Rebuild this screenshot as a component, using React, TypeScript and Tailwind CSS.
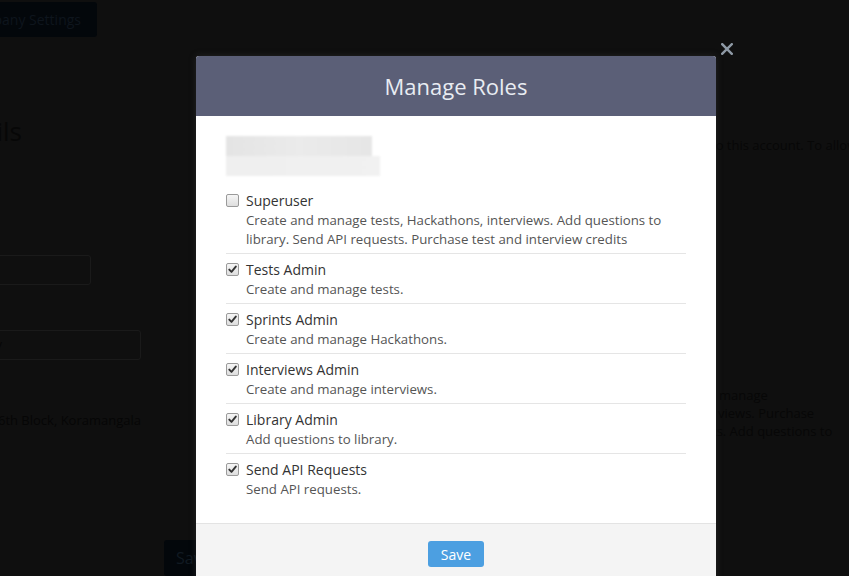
import React from "react";

const roles = [
  {
    name: "Superuser",
    desc: "Create and manage tests, Hackathons, interviews. Add questions to library. Send API requests. Purchase test and interview credits",
    checked: false,
  },
  { name: "Tests Admin", desc: "Create and manage tests.", checked: true },
  { name: "Sprints Admin", desc: "Create and manage Hackathons.", checked: true },
  { name: "Interviews Admin", desc: "Create and manage interviews.", checked: true },
  { name: "Library Admin", desc: "Add questions to library.", checked: true },
  { name: "Send API Requests", desc: "Send API requests.", checked: true },
];

function Check({ checked }: { checked: boolean }) {
  return (
    <span className="mt-[4px] flex h-[13px] w-[13px] shrink-0 items-center justify-center rounded-[2px] border border-[#9a9a9a] bg-gradient-to-b from-[#f6f6f6] to-[#dedede]">
      {checked && (
        <svg width="9" height="9" viewBox="0 0 9 9">
          <path d="M1.3 4.6 L3.5 6.9 L7.8 1.6" fill="none" stroke="#333" strokeWidth="1.9" strokeLinecap="round" strokeLinejoin="round" />
        </svg>
      )}
    </span>
  );
}

export default function App() {
  return (
    <div className="relative h-[576px] w-full overflow-hidden bg-[#0f0f0f] font-['Open_Sans',sans-serif]">
      {/* background page */}
      <div className="flex h-full">
        <div className="flex w-[196px] shrink-0 flex-col overflow-hidden">
          <div className="mt-[2px] flex w-[97px] justify-end">
            <div className="flex h-[35px] shrink-0 items-center whitespace-nowrap rounded-[3px] bg-[#03070b] px-[16px] text-[14px] text-[#0e151d]">
              Company Settings
            </div>
          </div>
          <div className="mt-[74px] flex w-[22px] justify-end whitespace-nowrap text-[26px] leading-[40px] text-[#070707]">
            Company Details
          </div>
          <div className="mt-[104px] flex w-[91px] justify-end">
            <div className="h-[30px] w-[200px] shrink-0 rounded-[3px] border border-[#1a1a1a]" />
          </div>
          <div className="mt-[45px] flex w-[141px] justify-end">
            <div className="flex h-[30px] w-[300px] shrink-0 items-center justify-end rounded-[3px] border border-[#1a1a1a] pr-[138px] text-[13px] text-[#060606]">
              India
              <span>y</span>
            </div>
          </div>
          <div className="mt-[44px] h-px w-full bg-[#1d1d1d]" />
          <div className="mt-[7px] flex w-[141px] justify-end whitespace-nowrap text-[13px] leading-[18px] text-[#060606]">
            16th Block, Koramangala
          </div>
          <div className="mt-[88px] h-px w-full bg-[#1a1a1a]" />
          <div className="ml-[164px] mt-[23px] flex h-[36px] w-[70px] shrink-0 items-center rounded-[3px] bg-[#03070b] pl-[12px] text-[16px] text-[#111a22]">
            Save
          </div>
        </div>
        <div className="w-[520px] shrink-0" />
        <div className="flex flex-1 flex-col overflow-hidden text-[13px] leading-[18px] text-[#070707]">
          <div className="-ml-[5px] mt-[136px] whitespace-nowrap">to this account. To allow</div>
          <div className="ml-[3px] mt-[232px] whitespace-nowrap">manage</div>
          <div className="ml-[2px] whitespace-nowrap">views. Purchase</div>
          <div className="-ml-[4px] whitespace-nowrap">ts. Add questions to</div>
        </div>
      </div>

      {/* close */}
      <div className="absolute left-[721px] top-[43px] h-[12px] w-[12px]">
        <svg width="12" height="12" viewBox="0 0 12 12">
          <path d="M1.2 1.2 L10.8 10.8 M10.8 1.2 L1.2 10.8" stroke="#8e99a5" strokeWidth="2.4" strokeLinecap="square" />
        </svg>
      </div>

      {/* modal */}
      <div className="absolute left-[196px] top-[56px] w-[520px] overflow-hidden rounded-t-[3px] bg-white shadow-[0_0_7px_rgba(60,60,60,0.45)]">
        <div className="flex h-[60px] items-center justify-center bg-[#5b5f77] text-[22px] text-[#e8ecf2]">
          Manage Roles
        </div>
        <div className="px-[30px] pb-[20px] pt-[20px]">
          <div className="flex flex-col blur-[1px]">
            <div className="h-[20px] w-[146px] bg-gradient-to-r from-[#e4e4e4] via-[#ebebeb] to-[#e6e6e6]" />
            <div className="h-[20px] w-[154px] bg-gradient-to-r from-[#efefef] to-[#f1f1f1]" />
          </div>
          <div className="mt-[9px] flex flex-col">
            {roles.map((r, i) => (
              <div
                key={r.name}
                className={
                  i < roles.length - 1
                    ? "flex gap-[7px] border-b border-[#e5e5e5] pb-[4px] pt-[5px]"
                    : "flex gap-[7px] pb-[4px] pt-[5px]"
                }
              >
                <Check checked={r.checked} />
                <div className="flex flex-col">
                  <div className="text-[14px] leading-[21px] text-[#333333]">{r.name}</div>
                  <div className="text-[13.25px] leading-[19px] text-[#555555]">{r.desc}</div>
                </div>
              </div>
            ))}
          </div>
        </div>
        <div className="flex h-[60px] justify-center border-t border-[#e3e3e3] bg-[#f4f4f4] pt-[17px]">
          <div className="flex h-[26px] w-[56px] items-center justify-center rounded-[3px] bg-[#4c9fe1] text-[14px] text-white">
            Save
          </div>
        </div>
      </div>
    </div>
  );
}
